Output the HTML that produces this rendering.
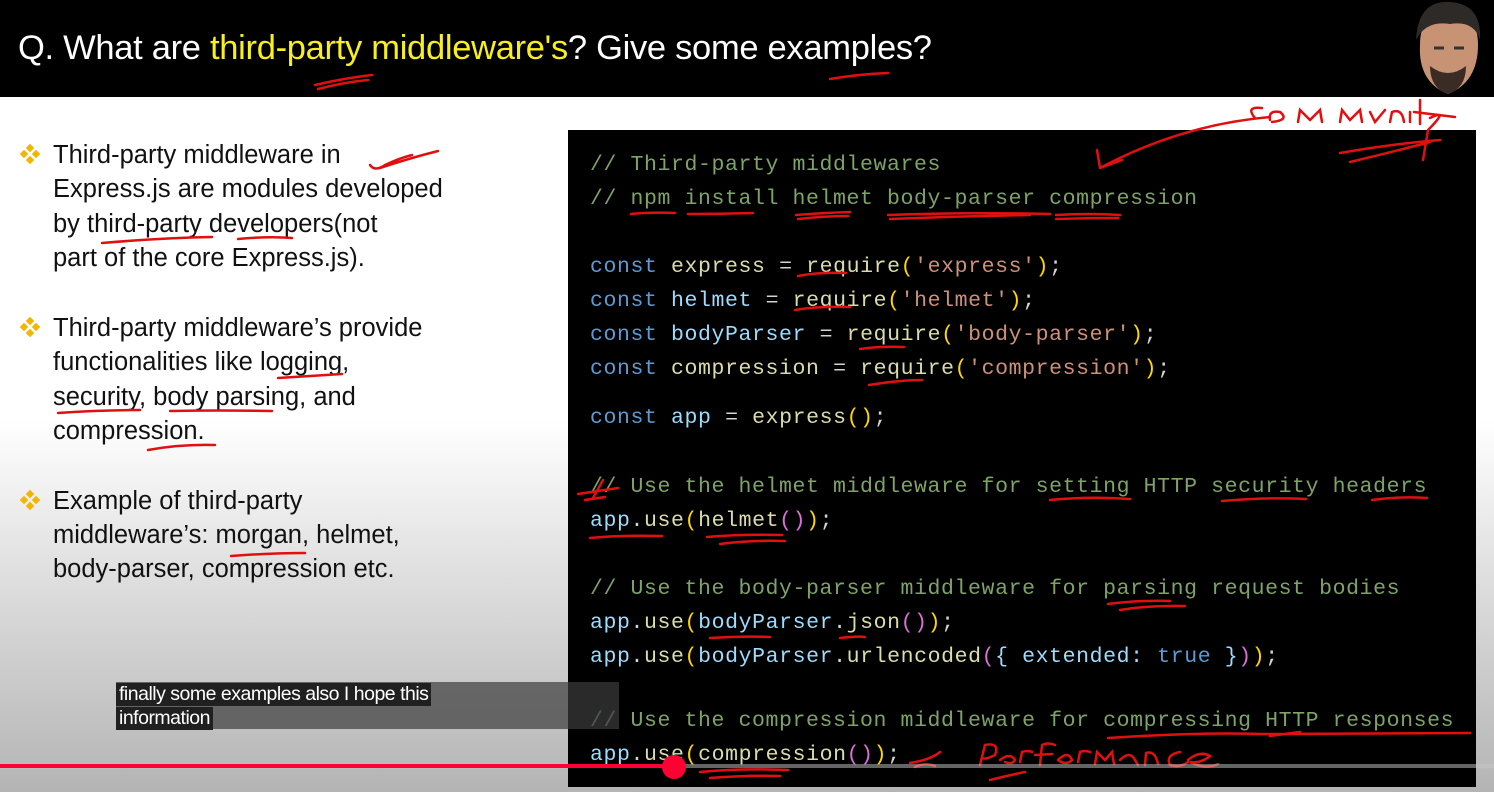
<!DOCTYPE html>
<html><head><meta charset="utf-8">
<style>
*{margin:0;padding:0;box-sizing:border-box}
body{width:1494px;height:792px;overflow:hidden;position:relative;font-family:"Liberation Sans",sans-serif;background:linear-gradient(#fff 0px,#fff 420px,#e2e2e2 560px,#b4b4b4 792px)}
.top{position:absolute;left:0;top:0;width:1494px;height:97px;background:#000}
.title{position:absolute;left:18px;top:29px;font-size:34.5px;color:#fff;white-space:nowrap;letter-spacing:-0.3px}
.title .y{color:#f7ef1e}
.code{position:absolute;left:568px;top:130px;width:908px;height:657px;background:#000}
.l{position:absolute;left:590px;font-family:"Liberation Mono",monospace;font-size:21.5px;letter-spacing:0.6px;white-space:pre;color:#dcdcaa;line-height:24px}
.c{color:#7ea367}.k{color:#5b9bd5}.v{color:#9cdcfe}.s{color:#ce9178}.p{color:#ffd700}.m{color:#da70d6}.f{color:#dcdcaa}.w{color:#d4d4d4}
.t{position:absolute;left:53px;font-size:25.5px;color:#111;white-space:nowrap;line-height:34px}
.b{position:absolute;left:19px;width:22px;height:22px}
.sub{position:absolute;left:116px;top:682px;width:503px;height:47px;background:rgba(60,60,60,0.7)}
.sl{position:absolute;left:116px;background:#202020;color:#fff;font-size:19.5px;padding:0 3px;line-height:23px;white-space:nowrap;letter-spacing:-0.5px}
</style></head><body>
<div class="top"></div>
<div class="title">Q. What are <span class="y">third-party middleware's</span>? Give some examples?</div>
<svg style="position:absolute;left:1408px;top:0" width="80" height="96"><path d="M12 45 Q10 82 40 94 Q70 82 70 45 Q70 12 40 12 Q12 12 12 45Z" fill="#c89274"/><path d="M8 40 Q10 0 42 2 Q74 4 72 40 Q66 20 42 24 Q18 20 8 40Z" fill="#2e2a28"/><path d="M22 66 Q40 80 58 66 Q58 88 40 94 Q22 88 22 66Z" fill="#3a2c25"/><path d="M26 48 h10 M46 48 h10" stroke="#333" stroke-width="3"/></svg>

<svg class="b" style="top:143px" viewBox="0 0 22 22"><g fill="#f4b400"><rect x="8" y="2" width="6" height="6" transform="rotate(45 11 5)"/><rect x="2" y="8" width="6" height="6" transform="rotate(45 5 11)"/><rect x="14" y="8" width="6" height="6" transform="rotate(45 17 11)"/><rect x="8" y="14" width="6" height="6" transform="rotate(45 11 17)"/></g></svg>
<svg class="b" style="top:316px" viewBox="0 0 22 22"><g fill="#f4b400"><rect x="8" y="2" width="6" height="6" transform="rotate(45 11 5)"/><rect x="2" y="8" width="6" height="6" transform="rotate(45 5 11)"/><rect x="14" y="8" width="6" height="6" transform="rotate(45 17 11)"/><rect x="8" y="14" width="6" height="6" transform="rotate(45 11 17)"/></g></svg>
<svg class="b" style="top:489px" viewBox="0 0 22 22"><g fill="#f4b400"><rect x="8" y="2" width="6" height="6" transform="rotate(45 11 5)"/><rect x="2" y="8" width="6" height="6" transform="rotate(45 5 11)"/><rect x="14" y="8" width="6" height="6" transform="rotate(45 17 11)"/><rect x="8" y="14" width="6" height="6" transform="rotate(45 11 17)"/></g></svg>

<div class="t" style="top:138px">Third-party middleware in</div>
<div class="t" style="top:172px">Express.js are modules developed</div>
<div class="t" style="top:207px">by third-party developers(not</div>
<div class="t" style="top:241px">part of the core Express.js).</div>
<div class="t" style="top:311px">Third-party middleware’s provide</div>
<div class="t" style="top:345px">functionalities like logging,</div>
<div class="t" style="top:380px">security, body parsing, and</div>
<div class="t" style="top:414px">compression.</div>
<div class="t" style="top:484px">Example of third-party</div>
<div class="t" style="top:518px">middleware’s: morgan, helmet,</div>
<div class="t" style="top:552px">body-parser, compression etc.</div>

<div class="code"></div>
<div class="l c" style="top:153px">// Third-party middlewares</div>
<div class="l c" style="top:187px">// npm install helmet body-parser compression</div>
<div class="l" style="top:255px"><span class="k">const</span> <span class="f">express</span> <span class="w">=</span> require<span class="p">(</span><span class="s">'express'</span><span class="p">)</span><span class="w">;</span></div>
<div class="l" style="top:289px"><span class="k">const</span> <span class="v">helmet</span> <span class="w">=</span> require<span class="p">(</span><span class="s">'helmet'</span><span class="p">)</span><span class="w">;</span></div>
<div class="l" style="top:323px"><span class="k">const</span> <span class="v">bodyParser</span> <span class="w">=</span> require<span class="p">(</span><span class="s">'body-parser'</span><span class="p">)</span><span class="w">;</span></div>
<div class="l" style="top:357px"><span class="k">const</span> <span class="f">compression</span> <span class="w">=</span> require<span class="p">(</span><span class="s">'compression'</span><span class="p">)</span><span class="w">;</span></div>
<div class="l" style="top:406px"><span class="k">const</span> <span class="v">app</span> <span class="w">=</span> express<span class="p">()</span><span class="w">;</span></div>
<div class="l c" style="top:475px">// Use the helmet middleware for setting HTTP security headers</div>
<div class="l" style="top:509px"><span class="v">app</span><span class="w">.</span>use<span class="p">(</span>helmet<span class="m">()</span><span class="p">)</span><span class="w">;</span></div>
<div class="l c" style="top:577px">// Use the body-parser middleware for parsing request bodies</div>
<div class="l" style="top:611px"><span class="v">app</span><span class="w">.</span>use<span class="p">(</span><span class="v">bodyParser</span><span class="w">.</span>json<span class="m">()</span><span class="p">)</span><span class="w">;</span></div>
<div class="l" style="top:645px"><span class="v">app</span><span class="w">.</span>use<span class="p">(</span><span class="v">bodyParser</span><span class="w">.</span>urlencoded<span class="m">(</span><span class="v">{ extended:</span> <span class="k">true</span> <span class="v">}</span><span class="m">)</span><span class="p">)</span><span class="w">;</span></div>
<div class="l c" style="top:709px">// Use the compression middleware for compressing HTTP responses</div>
<div class="l" style="top:743px"><span class="v">app</span><span class="w">.</span>use<span class="p">(</span>compression<span class="m">()</span><span class="p">)</span><span class="w">;</span></div>

<svg style="position:absolute;left:0;top:0" width="1494" height="792" fill="none" stroke="#e01010" stroke-width="2.5" stroke-linecap="round">
<path d="M315 85 Q345 78 372 75 M318 89 Q345 82 368 80"/>
<path d="M830 79 Q860 74 888 73"/>
<path d="M1270 117 Q1180 125 1100 168 M1100 168 L1097 150 M1100 168 L1122 160"/>
<path d="M1255 118 Q1245 106 1262 108 M1270 120 Q1268 110 1280 112 Q1290 120 1272 122 M1298 122 L1300 110 L1310 120 L1320 110 L1322 122 M1340 122 L1342 110 L1350 120 L1360 110 L1362 122 M1370 112 L1375 122 L1385 110 M1390 122 L1392 112 Q1402 108 1404 122 M1410 122 L1410 112 M1420 100 L1420 124 M1414 112 L1455 117 M1430 118 Q1450 108 1428 130 L1423 160"/>
<path d="M1340 153 Q1390 144 1440 140 M1350 162 Q1400 150 1430 142"/>
<path d="M370 165 Q375 172 385 165 Q400 158 412 155 M380 168 Q410 158 438 151"/>
<path d="M102 243 Q160 238 212 237 M238 239 Q270 236 292 238"/>
<path d="M278 378 Q310 376 342 374 M58 413 Q100 410 140 410 M170 411 Q220 410 272 411 M148 450 Q180 444 215 445"/>
<path d="M231 556 Q270 553 305 553"/>
<path d="M631 214 Q650 212 675 213 M688 214 Q720 214 753 213 M796 215 Q820 213 850 212 M798 219 Q825 216 848 216 M888 215 Q960 212 1050 214 M890 219 Q960 216 1030 215 M1056 215 Q1090 213 1120 215 M1056 219 Q1090 218 1118 218"/>
<path d="M798 276 Q820 272 846 273 M795 310 Q820 306 850 307 M860 349 Q880 346 904 347 M869 385 Q900 380 922 380"/>
<path d="M578 494 L618 488 M585 500 L605 497 M603 480 L593 498 M1050 500 Q1090 496 1130 499 M1222 501 Q1270 497 1306 499 M1372 500 Q1400 496 1427 498"/>
<path d="M590 538 Q620 535 662 536 M707 537 Q740 534 782 535 M720 544 Q750 540 785 541"/>
<path d="M1108 604 Q1140 600 1170 601 M1120 610 Q1150 605 1185 606"/>
<path d="M710 638 Q740 636 770 637 M840 638 Q858 636 865 637"/>
<path d="M1108 738 Q1200 732 1260 734 L1470 733 M1270 736 L1300 732"/>
<path d="M700 772 Q740 768 788 770 M710 778 Q750 775 780 776 M910 763 Q930 760 940 752 M915 767 Q925 762 935 766 M990 780 Q1010 775 1025 772"/>
<path d="M980 765 L985 745 Q1000 742 995 755 Q985 760 982 758 M1000 760 Q1010 752 1015 760 Q1012 765 1005 762 M1020 762 L1022 752 Q1028 750 1032 752 M1040 765 L1042 745 Q1048 742 1055 745 M1035 755 L1052 754 M1058 760 Q1068 750 1072 760 Q1066 766 1058 760 M1078 762 L1080 752 Q1085 750 1090 752 M1095 764 L1097 752 L1105 760 L1112 752 L1114 764 M1120 760 Q1130 750 1135 760 L1138 765 M1145 765 L1146 753 Q1155 750 1158 764 M1180 752 Q1165 755 1170 765 Q1180 768 1188 762 M1188 760 Q1200 750 1210 756 Q1200 764 1190 762 Q1205 770 1218 764"/>
</svg>

<div class="sub"></div>
<div class="sl" style="top:683px">finally some examples also I hope this</div>
<div class="sl" style="top:707px">information</div>

<div style="position:absolute;left:0;top:764px;width:1494px;height:4px;background:rgba(200,200,200,0.5)"></div>
<div style="position:absolute;left:0;top:764px;width:674px;height:4px;background:#ff0033"></div>
<div style="position:absolute;left:662px;top:755px;width:24px;height:24px;border-radius:50%;background:#ff0033"></div>
</body></html>
